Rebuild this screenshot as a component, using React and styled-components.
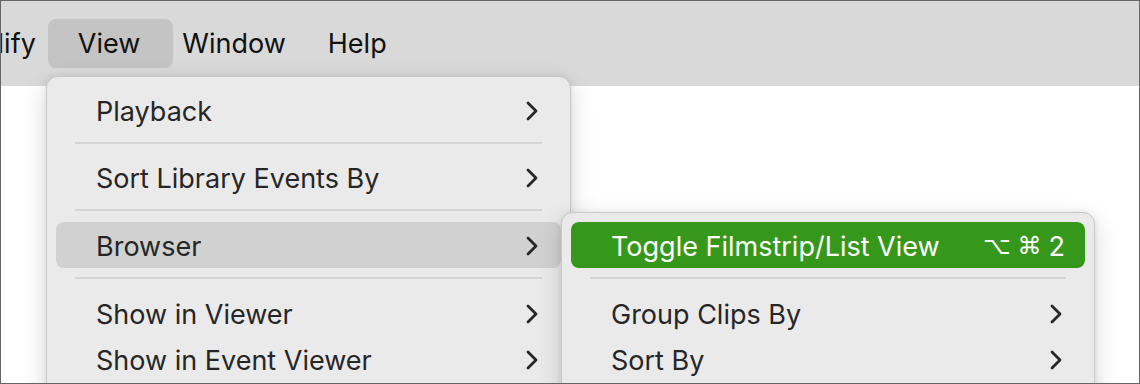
import React from "react";
import styled, { createGlobalStyle } from "styled-components";

const GlobalStyle = createGlobalStyle`
    html, body {
        margin: 0;
        padding: 0;
        background: #ffffff;
    }
    body {
        font-family: Inter, "Noto Sans", "Liberation Sans", sans-serif;
        -webkit-font-smoothing: antialiased;
    }
`;

const Frame = styled.div`
    position: relative;
    width: 1140px;
    height: 384px;
    box-sizing: border-box;
    border: 1px solid #666666;
    background: #ffffff;
    overflow: hidden;
`;

const MenuBar = styled.nav`
    height: 85px;
    background: #d9d9d9;
    display: flex;
    align-items: center;
    font-size: 27px;
    color: #111111;
`;

const BarItem = styled.div`
    position: relative;
    padding: 0 21px;
    line-height: 49px;
    white-space: nowrap;
    margin-left: ${(p) => p.$offset || 0}px;

    &::before {
        content: "";
        display: ${(p) => (p.$active ? "block" : "none")};
        position: absolute;
        top: 0;
        bottom: 0;
        left: -9px;
        right: -12px;
        border-radius: 8px;
        background: #c4c4c4;
        z-index: 0;
    }

    span {
        position: relative;
        z-index: 1;
    }
`;

const Menu = styled.div`
    position: absolute;
    left: ${(p) => p.$left}px;
    top: ${(p) => p.$top}px;
    width: ${(p) => p.$width}px;
    box-sizing: border-box;
    padding: ${(p) => p.$padTop}px 9px 40px;
    background: #eaeaea;
    border: 1px solid #c9c9c9;
    border-radius: 12px;
    box-shadow: 0 8px 24px rgba(0, 0, 0, 0.16), 0 0 6px rgba(0, 0, 0, 0.08);
    display: flex;
    flex-direction: column;
`;

const Row = styled.div`
    height: 46px;
    box-sizing: border-box;
    padding: 2px 22px 0 40px;
    display: flex;
    align-items: center;
    border-radius: 8px;
    font-size: 27px;
    color: ${(p) => (p.$tone === "green" ? "#ffffff" : "#262626")};
    background: ${(p) =>
        p.$tone === "green" ? "#36981a" : p.$tone === "gray" ? "#d1d1d1" : "transparent"};
    white-space: nowrap;
`;

const Label = styled.span`
    flex: 1;
`;

const Separator = styled.div`
    height: 2px;
    margin: ${(p) => (p.$tight ? "9px 19px 10px" : "9px 19px 11px")};
    background: #d4d4d4;
`;

const Shortcut = styled.span`
    display: flex;
    align-items: center;
    gap: 7px;
    margin-right: -2px;
`;

const Glyph = styled.span`
    font-family: "DejaVu Sans", sans-serif;
    font-size: 24px;
`;

function Chevron() {
    return (
        <svg width="14" height="20" viewBox="0 0 14 20" fill="none">
            <path
                d="M3 2 L11 10 L3 18"
                stroke="currentColor"
                strokeWidth="2.8"
                strokeLinecap="round"
                strokeLinejoin="round"
            />
        </svg>
    );
}

function MenuRow({ label, tone, shortcut }) {
    return (
        <Row $tone={tone}>
            <Label>{label}</Label>
            {shortcut ? (
                <Shortcut>
                    <Glyph>⌥</Glyph>
                    <Glyph>⌘</Glyph>
                    <span>2</span>
                </Shortcut>
            ) : (
                <Chevron />
            )}
        </Row>
    );
}

export default function App() {
    return (
        <>
            <GlobalStyle />
            <Frame>
                <MenuBar>
                    <BarItem $offset={-75}><span>Modify</span></BarItem>
                    <BarItem $active><span>View</span></BarItem>
                    <BarItem><span>Window</span></BarItem>
                    <BarItem><span>Help</span></BarItem>
                </MenuBar>

                <Menu $left={45} $top={75} $width={525} $padTop={10}>
                    <MenuRow label="Playback" />
                    <Separator $tight />
                    <MenuRow label="Sort Library Events By" />
                    <Separator />
                    <MenuRow label="Browser" tone="gray" />
                    <Separator />
                    <MenuRow label="Show in Viewer" />
                    <MenuRow label="Show in Event Viewer" />
                </Menu>

                <Menu $left={560} $top={211} $width={534} $padTop={9}>
                    <MenuRow label="Toggle Filmstrip/List View" tone="green" shortcut />
                    <Separator />
                    <MenuRow label="Group Clips By" />
                    <MenuRow label="Sort By" />
                </Menu>
            </Frame>
        </>
    );
}
